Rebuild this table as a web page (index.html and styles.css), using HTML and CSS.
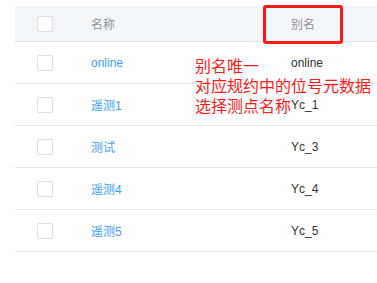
FILE: index.html
```html
<!DOCTYPE html>
<html lang="zh">
<head>
    <meta charset="UTF-8">
    <meta name="viewport" content="width=device-width, initial-scale=1.0">
    <title>测点列表</title>
    <link rel="stylesheet" href="styles.css">
</head>
<body>

    <!-- 测点表格 -->
    <div class="table-wrap">
        <table class="point-table">
            <colgroup>
                <col class="col-check">
                <col class="col-name">
                <col>
            </colgroup>
            <thead>
                <tr>
                    <th><span class="checkbox"></span></th>
                    <th>名称</th>
                    <th>别名</th>
                </tr>
            </thead>
            <tbody>
                <tr>
                    <td><span class="checkbox"></span></td>
                    <td><a href="#">online</a></td>
                    <td>online</td>
                </tr>
                <tr>
                    <td><span class="checkbox"></span></td>
                    <td><a href="#">遥测1</a></td>
                    <td>Yc_1</td>
                </tr>
                <tr>
                    <td><span class="checkbox"></span></td>
                    <td><a href="#">测试</a></td>
                    <td>Yc_3</td>
                </tr>
                <tr>
                    <td><span class="checkbox"></span></td>
                    <td><a href="#">遥测4</a></td>
                    <td>Yc_4</td>
                </tr>
                <tr>
                    <td><span class="checkbox"></span></td>
                    <td><a href="#">遥测5</a></td>
                    <td>Yc_5</td>
                </tr>
            </tbody>
        </table>

        <!-- 标注 -->
        <div class="mark-box"></div>
        <div class="mark-note">别名唯一<br>对应规约中的位号元数据<br>选择测点名称</div>
    </div>

</body>
</html>
```

FILE: styles.css
```css
body {
    margin: 0;
    background: #fff;
    font-family: "Liberation Sans", "Noto Sans CJK SC", sans-serif;
}
.table-wrap {
    position: relative;
    padding: 6px 0 0 15px;
}
.point-table {
    width: 362px;
    border-collapse: collapse;
    table-layout: fixed;
    font-size: 12px;
}
.col-check {
    width: 66px;
}
.col-name {
    width: 200px;
}
.point-table th,
.point-table td {
    padding: 0 0 0 10px;
    text-align: left;
    border-bottom: 1px solid #e6e6e6;
    white-space: nowrap;
}
.point-table th:first-child,
.point-table td:first-child {
    padding-left: 22px;
}
.point-table th {
    height: 35px;
    background: #f3f6f9;
    color: #909399;
    font-weight: normal;
}
.point-table td {
    height: 41px;
    color: #333;
}
.point-table a {
    color: #409eff;
    text-decoration: none;
}
.checkbox {
    display: block;
    width: 14px;
    height: 14px;
    border: 1px solid #dcdfe6;
    border-radius: 2px;
    background: #fff;
}
/* 标注 */
.mark-box {
    position: absolute;
    left: 263px;
    top: 5px;
    width: 74px;
    height: 33px;
    border: 3px solid #ff1a1a;
    border-radius: 3px;
}
.mark-note {
    position: absolute;
    left: 195px;
    top: 55px;
    color: #ff1a1a;
    font-family: "Noto Sans CJK SC", sans-serif;
    font-size: 16px;
    line-height: 20px;
}
```
